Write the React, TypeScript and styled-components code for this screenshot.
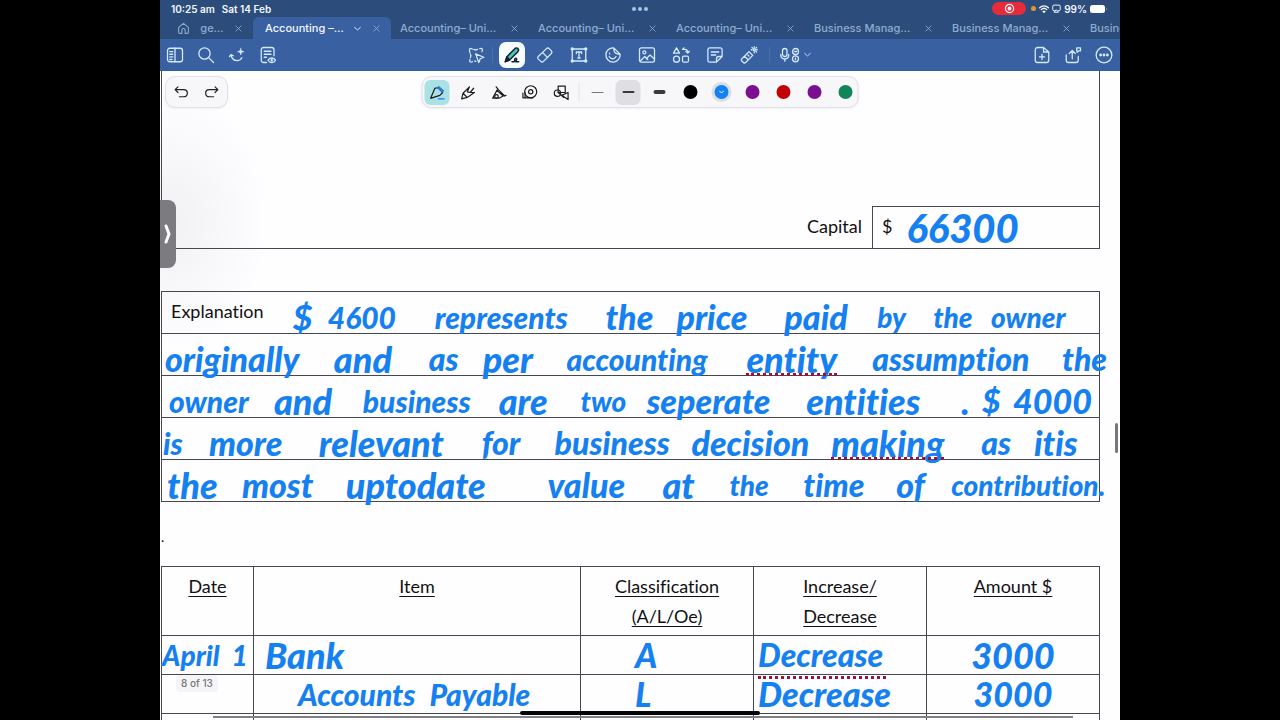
import React from "react";
import styled, { createGlobalStyle, css } from "styled-components";

const INK = "#1580f0";
const LINE = "#47474c";

const GlobalStyle = createGlobalStyle`
  * { box-sizing: border-box; }
  body { margin: 0; background: #000; font-family: Inter, "Liberation Sans", sans-serif; }
  button { border: 0; padding: 0; margin: 0; background: none; font: inherit; color: inherit; }
`;

const Tablet = styled.div`
  position: relative;
  display: flex;
  flex-direction: column;
  width: 75%;
  height: 100vh;
  margin: 0 auto;
  overflow: hidden;
  background: #fefdff;
`;

/* ---------- status bar ---------- */
const StatusBar = styled.header`
  display: grid;
  grid-template-columns: 1fr auto 1fr;
  align-items: center;
  flex: none;
  height: 17px;
  padding: 0 12px 0 11px;
  background: #2c4d7b;
  color: #f4f8fd;
  font-size: 10px;
  font-weight: 600;
`;
const StatusTime = styled.div`
  display: flex;
  gap: 7px;
`;
const StatusDots = styled.div`
  display: flex;
  gap: 2px;
  i { width: 4px; height: 4px; border-radius: 50%; background: #a9c4e6; }
`;
const StatusRight = styled.div`
  display: flex;
  justify-content: flex-end;
  align-items: center;
  gap: 3px;
`;
const RecordPill = styled.span`
  display: grid;
  place-items: center;
  width: 34px;
  height: 13px;
  margin-right: 2px;
  border-radius: 7px;
  background: #e62c3b;
`;
const MicDot = styled.i`
  width: 5px;
  height: 5px;
  border-radius: 50%;
  background: #e09a2c;
`;

/* ---------- tabs ---------- */
const TabStrip = styled.nav`
  display: flex;
  flex: none;
  height: 22px;
  overflow: hidden;
  background: #2c4d7b;
  color: #8eabd2;
  font-size: 11px;
  font-weight: 500;
`;
const HomeTab = styled.div`
  display: flex;
  flex: 0 0 93px;
  align-items: center;
  justify-content: space-between;
  padding: 0 10px 0 17px;
`;
const Tab = styled.div<{ $active?: boolean }>`
  display: flex;
  flex: 0 0 138px;
  align-items: center;
  justify-content: space-between;
  padding: 0 10px 0 9px;
  white-space: nowrap;
  ${(p) =>
    p.$active &&
    css`
      padding-left: 12px;
      border-radius: 6px 6px 0 0;
      background: #3960a0;
      color: #f2f7fd;
    `}
`;
const TabButton = styled.button`
  display: flex;
  align-items: center;
`;
const CloseButton = styled(TabButton)`
  color: #9ab5d9;
`;

/* ---------- main toolbar ---------- */
const Toolbar = styled.div`
  display: grid;
  grid-template-columns: 1fr auto 1fr;
  align-items: center;
  flex: none;
  height: 32px;
  padding: 0 6px 0 5px;
  border-bottom: 1px solid #2f6299;
  background: #3960a0;
  color: #d3ebff;
`;
const ToolGroup = styled.div<{ $end?: boolean }>`
  display: flex;
  align-items: center;
  gap: 11px;
  justify-content: ${(p) => (p.$end ? "flex-end" : "flex-start")};
`;
const CenterTools = styled.div`
  display: flex;
  align-items: center;
  gap: 10px;
`;
const SelectGroup = styled.div`
  display: flex;
  align-items: center;
  gap: 6px;
`;
const MidGroup = styled.div`
  display: flex;
  align-items: center;
  gap: 14px;
`;
const ToolButton = styled.button<{ $active?: boolean }>`
  display: grid;
  place-items: center;
  width: ${(p) => (p.$active ? 26 : 20)}px;
  height: ${(p) => (p.$active ? 26 : 20)}px;
  border-radius: 7px;
  background: ${(p) => (p.$active ? "#f7fcff" : "none")};
`;
const MicButton = styled.button`
  display: flex;
  align-items: center;
  gap: 4px;
  width: 34px;
`;
const ToolDivider = styled.i`
  width: 1px;
  height: 16px;
  background: #4a71ac;
`;
const PenDivider = styled.i`
  width: 1px;
  height: 18px;
  margin: 0 -1px;
  background: #e2e2e6;
`;

/* ---------- document ---------- */
const Document = styled.main`
  position: relative;
  flex: 1;
  min-height: 0;
  padding: 0 20px 0 1px;
  background: radial-gradient(ellipse 100px 130px at 10px 150px, #f1f1f3 0%, #fefdff 100%);
  color: #111;
  font-family: Lato, "Liberation Sans", sans-serif;
  font-size: 18px;
  font-variant-ligatures: none;
`;
const FloatingBar = styled.div`
  position: absolute;
  z-index: 2;
  top: 5px;
  display: flex;
  align-items: center;
  height: 32px;
  border: 1px solid #e1e0e4;
  border-radius: 10px;
  background: #f7f6f8;
  box-shadow: 0 1px 3px #0000000f;
`;
const HistoryBar = styled(FloatingBar)`
  left: 5px;
  width: 63px;
  justify-content: space-around;
  color: #222;
`;
const PenBar = styled(FloatingBar)`
  left: 50%;
  gap: 6px;
  padding-left: 2px;
  transform: translateX(-50%);
  color: #1c1c1e;
`;
const PenButton = styled.button<{ $bg?: string }>`
  display: grid;
  place-items: center;
  width: 25px;
  height: 25px;
  border-radius: 6px;
  background: ${(p) => p.$bg ?? "none"};
`;
const StrokeSample = styled.i<{ $h: number; $w: number }>`
  width: ${(p) => p.$w}px;
  height: ${(p) => p.$h}px;
  border-radius: 2px;
  background: ${(p) => (p.$h === 1 ? "#77777b" : "#3a3a3c")};
`;
const Swatch = styled.i<{ $color: string; $on?: boolean }>`
  display: grid;
  place-items: center;
  width: 14px;
  height: 14px;
  border-radius: 50%;
  background: ${(p) => p.$color};
  box-shadow: ${(p) => (p.$on ? "0 0 0 3px #d9dde4" : "none")};
`;
const SideHandle = styled.button`
  position: absolute;
  z-index: 2;
  left: 0;
  top: 129px;
  display: grid;
  place-items: center;
  width: 16px;
  height: 68px;
  border-radius: 0 8px 8px 0;
  background: #7c7b7f;
  color: #fff;
`;

const CapitalBox = styled.section`
  display: flex;
  justify-content: flex-end;
  align-items: flex-end;
  height: 178px;
  border: 1px solid ${LINE};
  border-top: 0;
`;
const CapitalLabel = styled.span`
  padding-right: 10px;
  line-height: 44px;
`;
const CapitalValue = styled.div`
  display: flex;
  gap: 14px;
  width: 227px;
  height: 42px;
  padding-left: 9px;
  border: solid ${LINE};
  border-width: 1px 0 0 1px;
  line-height: 38px;
`;
const inkStyle = css`
  color: ${INK};
  font-family: Lato, "Liberation Sans", sans-serif;
  font-style: italic;
  font-weight: 900;
`;
const CapitalInk = styled.span`
  ${inkStyle}
  font-size: 40px;
  line-height: 42px;
`;
const Explanation = styled.section`
  margin-top: 42px;
  border: solid ${LINE};
  border-width: 0 1px 1px;
`;
const RuledLine = styled.div`
  position: relative;
  height: 42px;
  border-top: 1px solid ${LINE};
  padding-left: 9px;
  line-height: 38px;
`;
const InkWord = styled.span<{ $x: number; $size: number; $flag?: boolean }>`
  ${inkStyle}
  position: absolute;
  z-index: 1;
  top: 0;
  left: ${(p) => ((p.$x - 162) / 938) * 100}%;
  font-size: ${(p) => p.$size}px;
  line-height: 50px;
  white-space: nowrap;
  ${(p) =>
    p.$flag &&
    css`
      &::after {
        content: "";
        position: absolute;
        left: 0;
        right: 0;
        bottom: 8px;
        border-bottom: 3px dotted #9c1238;
      }
    `}
`;
const Stop = styled.p`
  height: 64px;
  margin: 0;
  font-size: 14px;
  line-height: 70px;
`;
const Ledger = styled.table`
  width: 100%;
  border-collapse: collapse;
  table-layout: fixed;
  th, td { padding: 0; border: 1px solid ${LINE}; }
  th {
    height: 69px;
    padding-top: 4px;
    font-weight: 400;
    line-height: 30px;
    text-decoration: underline;
    text-underline-offset: 3px;
    vertical-align: top;
  }
`;
const Col = styled.col<{ $w: number }>`
  width: ${(p) => (p.$w / 938) * 100}%;
`;
const InkCell = styled.td<{ $pad?: number; $center?: boolean; $size?: number }>`
  ${inkStyle}
  height: 39px;
  font-size: ${(p) => p.$size ?? 30}px;
  line-height: 38px;
  white-space: nowrap;
  text-align: ${(p) => (p.$center ? "center" : "left")};
  && { padding-left: ${(p) => p.$pad ?? 0}px; }
`;
const Spread = styled.div<{ $gap: number }>`
  display: flex;
  gap: ${(p) => p.$gap}px;
  height: 38px;
`;
const Flagged = styled.span`
  position: relative;
  display: block;
  width: 128px;
  height: 38px;
  &::after {
    content: "";
    position: absolute;
    left: 0;
    right: 0;
    bottom: -5px;
    border-bottom: 3px dotted #9c1238;
  }
`;
const PageCount = styled.div`
  position: absolute;
  z-index: 2;
  left: 16px;
  bottom: 28px;
  padding: 0 5px;
  border-radius: 4px;
  background: #f5f4f6;
  color: #77777b;
  font: 500 10px/17px Inter, sans-serif;
`;
const ScrollThumb = styled.i`
  position: absolute;
  right: 2px;
  top: 352px;
  width: 3px;
  height: 30px;
  border-radius: 2px;
  background: #77767a;
`;
const ScrollTrack = styled.i`
  position: absolute;
  z-index: 2;
  left: 53px;
  right: 47px;
  bottom: 2px;
  height: 2px;
  background: #7f7f84;
`;
const HomeIndicator = styled.i`
  position: absolute;
  z-index: 3;
  left: 50%;
  bottom: 5px;
  width: 25%;
  height: 4px;
  border-radius: 2px;
  background: #050505;
  transform: translateX(-50%);
`;

/* ---------- icons ---------- */
const Icon = ({ size = 18, w = 1.7, children }: { size?: number; w?: number; children: React.ReactNode }) => (
  <svg width={size} height={size} viewBox="0 0 24 24" fill="none" stroke="currentColor" strokeWidth={w} strokeLinecap="round" strokeLinejoin="round" aria-hidden="true">
    {children}
  </svg>
);
const Close = () => <Icon size={9} w={2}><path d="M5 5l14 14M19 5L5 19" /></Icon>;
const Chevron = ({ size = 9 }: { size?: number }) => <Icon size={size} w={3}><path d="M2 8l10 9 10-9" /></Icon>;

const leftTools = [
  ["Sidebar", <><rect x="2" y="3" width="20" height="18" rx="3" /><path d="M12 3v18M5 7.500h4M5 11h4M5 14.500h4M5 18h3" /></>],
  ["Search", <><circle cx="10" cy="10" r="7.500" /><path d="M15.500 15.500L22 22" /></>],
  ["Assistant", <><path d="M4 12c1 5 4 7.500 8 7.500 3 0 5.500-1.500 6.500-4M2 14l2-2.500 3 1.500" /><path d="M17 3c.5 3 1.500 4 4.500 4.500-3 .5-4 1.500-4.500 4.500-.5-3-1.500-4-4.500-4.500 3-.5 4-1.500 4.500-4.500z" fill="currentColor" strokeWidth=".6" /></>],
  ["Outline", <><path d="M10 22H6a3 3 0 0 1-3-3V5a3 3 0 0 1 3-3h11a3 3 0 0 1 3 3v8M7 7h9M7 11h9M7 15h3" /><path d="M12 19c2-4 8-4 10 0-2 4-8 4-10 0z" /><circle cx="17" cy="19" r=".8" /></>],
] as const;

const midTools = [
  ["Eraser", <><path d="M3 14L14 3.500a2.500 2.500 0 0 1 3.500 0L20.500 6.500a2.500 2.500 0 0 1 0 3.500L10 20.500a2.500 2.500 0 0 1-3.500 0L3 17.500a2.500 2.500 0 0 1 0-3.500zM9 9l6.500 6.500" /></>],
  ["Text", <><path d="M3 4h18v16H3zM8.500 10V8h7v2M12 8v8M10.500 16h3" /><g fill="currentColor"><circle cx="3" cy="4" r="1.400" /><circle cx="21" cy="4" r="1.400" /><circle cx="3" cy="20" r="1.400" /><circle cx="21" cy="20" r="1.400" /></g></>],
  ["Sticker", <><path d="M13 2.500A9.500 9.500 0 1 0 21.500 11zM13 2.500c0 6 2 8.500 8.500 8.500M7 14c2 4 7 4 9 0M7.500 9.500v1" /></>],
  ["Image", <><rect x="2" y="2.500" width="20" height="19" rx="2.500" /><circle cx="8.500" cy="8.500" r="2" /><path d="M3 20l6-6 4 4M11 17l5-5 5.500 5" /></>],
  ["Shapes", <><path d="M6 2.500l4 7H2z" /><circle cx="6" cy="17.500" r="4" /><rect x="14" y="13.500" width="8" height="8" rx="2" /><path d="M14 4.500h3a4 4 0 0 1 4 4M14 4.500l2-2M21 9.500l-2.500-2M21 9.500l2-2.500" /></>],
  ["Note", <><path d="M21.500 14V5a2.500 2.500 0 0 0-2.500-2.500H5A2.500 2.500 0 0 0 2.500 5v14A2.500 2.500 0 0 0 5 21.500h9zM14 21.500V17a3 3 0 0 1 3-3h4.500M7 8h10M7 12h6" /></>],
  ["Laser", <><path d="M2.500 17L12 7.500l5 5L7.500 22a2 2 0 0 1-3 0l-2-2a2 2 0 0 1 0-3zM6 13.500l4.500 4.500M10.500 12l1.500 1.500" /><circle cx="19" cy="5" r="1.500" /><path d="M19 .8v1M19 8v1M15 5h1M22 5h1M16 2l.7.7M22 2l-.7.7M22 8l-.7-.7" /></>],
] as const;

const pens = [
  ["Ball pen", <><path d="M3 20l6-14 5-1 6 7-4 4-12 4z" /><path d="M13 4l8 7" stroke="#2f78cf" strokeWidth="4" strokeLinecap="butt" /><path d="M14 21h8" stroke="#1580f0" /></>],
  ["Fountain pen", <><path d="M3 21l2-8L14 4M3 21l8-2 10-7M5 13l6 6M14 4l-3 7 4 1 5-6M15 12l6 0" /></>],
  ["Brush pen", <><path d="M3 20L9 9l9 8-6 3zM8 4l3 4-2 1M11 8l9 9 2-1M18 17l-6 3" /><circle cx="8.500" cy="17.500" r="2.500" /></>],
  ["Tape", <><circle cx="13" cy="11" r="8.500" /><circle cx="13" cy="11" r="3" /><path d="M5 12v7M2 13v6.500h14" /></>],
  ["Shape pen", <><rect x="8" y="3" width="10" height="9" /><circle cx="7" cy="13" r="4.500" /><path d="M13 16l9-4v10zM8 12l8 7" /></>],
] as const;

type Word = [text: string, x: number, size: number, flag?: boolean];
const lines: Word[][] = [
  [["$", 293, 34], ["4600", 328, 30], ["represents", 435, 30], ["the", 606, 34], ["price", 677, 34], ["paid", 785, 34], ["by", 878, 28], ["the", 934, 28], ["owner", 992, 28]],
  [["originally", 165, 34], ["and", 334, 36], ["as", 429, 32], ["per", 483, 36], ["accounting", 567, 30], ["entity", 747, 36, true], ["assumption", 873, 32], ["the", 1063, 32]],
  [["owner", 169, 30], ["and", 274, 36], ["business", 363, 30], ["are", 499, 36], ["two", 581, 28], ["seperate", 647, 34], ["entities", 807, 36], [".", 962, 36], ["$", 983, 32], ["4000", 1014, 34]],
  [["is", 163, 30], ["more", 209, 34], ["relevant", 319, 36], ["for", 482, 32], ["business", 555, 32], ["decision", 692, 34], ["making", 832, 36, true], ["as", 982, 32], ["itis", 1035, 34]],
  [["the", 167, 36], ["most", 242, 34], ["uptodate", 346, 36], ["value", 548, 34], ["at", 663, 36], ["the", 730, 28], ["time", 804, 32], ["of", 897, 34], ["contribution.", 952, 28]],
];
const colors = ["#000", "#1481f2", "#7b0f92", "#c20305", "#7b0f92", "#12845a"];
const otherTabs = ["Accounting– Uni…", "Accounting– Uni…", "Accounting– Uni…", "Business Manag…", "Business Manag…", "Business Manag…"];

export default function App() {
  return (
    <>
      <GlobalStyle />
      <Tablet>
        <StatusBar>
          <StatusTime><span>10:25 am</span><span>Sat 14 Feb</span></StatusTime>
          <StatusDots><i /><i /><i /></StatusDots>
          <StatusRight>
            <RecordPill><Icon size={11} w={2.6}><circle cx="12" cy="12" r="9" /><circle cx="12" cy="12" r="3" fill="currentColor" /></Icon></RecordPill>
            <MicDot />
            <Icon size={10} w={3.2}><path d="M1.500 9c6-6 15-6 21 0M5.500 13.500c4-4 9-4 13 0M10 18c1-1 3-1 4 0l-2 2z" /></Icon>
            <Icon size={9} w={2.6}><path d="M8 18H5a3 3 0 0 1-3-3V6a3 3 0 0 1 3-3h14a3 3 0 0 1 3 3v9a3 3 0 0 1-3 3h-3M12 16l5 6H7z" /></Icon>
            <span>99%</span>
            <svg width="18" height="8" viewBox="0 0 18 8" aria-hidden="true"><rect width="15" height="8" rx="2.500" fill="#fff" /><path d="M16 2.500v3q1.500-1.500 0-3z" fill="#a9c4e6" /></svg>
          </StatusRight>
        </StatusBar>

        <TabStrip>
          <HomeTab>
            <TabButton aria-label="Home"><Icon size={13} w={2}><path d="M3 10l9-7.500L21 10v9a2 2 0 0 1-2 2h-4v-6a3 3 0 0 0-6 0v6H5a2 2 0 0 1-2-2z" /></Icon></TabButton>
            <TabButton>ge…</TabButton>
            <CloseButton aria-label="Close tab"><Close /></CloseButton>
          </HomeTab>
          <Tab $active>
            <TabButton>Accounting –…</TabButton>
            <TabButton aria-label="Tab menu"><Chevron size={7} /></TabButton>
            <CloseButton aria-label="Close tab"><Close /></CloseButton>
          </Tab>
          {otherTabs.map((t, i) => (
            <Tab key={i}>
              <TabButton>{t}</TabButton>
              <CloseButton aria-label="Close tab"><Close /></CloseButton>
            </Tab>
          ))}
        </TabStrip>

        <Toolbar>
          <ToolGroup>
            {leftTools.map(([name, art]) => <ToolButton key={name} aria-label={name}><Icon>{art}</Icon></ToolButton>)}
          </ToolGroup>
          <CenterTools>
            <SelectGroup>
              <ToolButton aria-label="Select">
                <Icon><path d="M9 4.500q2.500 1.500 5 0M17 3.500c4-1 4 1 3 4M4 9C2 4 4 2 7 4M4.500 11q1.500 2 0 4.500M4 18c-1 3 0 4 3.500 3M10 20l2 .5" /><path d="M11.500 10.500l11 4.500-4.800 2-2 5z" /></Icon>
              </ToolButton>
              <ToolDivider />
              <ToolButton $active aria-label="Pen">
                <Icon size={20} w={1.8}>
                  <g stroke="#15202b"><path d="M4 20l2-6L16 4q3-1 4 2l-1 2L9 18z" fill="#45c9bd" /><path d="M4 20l2-6 3 4z" fill="#15202b" /><path d="M12 20c4 1 7-3 5-4s-3 4 0 4h3" /></g>
                </Icon>
              </ToolButton>
            </SelectGroup>
            <MidGroup>
              {midTools.map(([name, art]) => <ToolButton key={name} aria-label={name}><Icon>{art}</Icon></ToolButton>)}
            </MidGroup>
            <ToolDivider />
            <MicButton aria-label="Record audio">
              <svg width="20" height="16" viewBox="0 0 20 16" fill="none" stroke="currentColor" strokeWidth="1.300" strokeLinecap="round" aria-hidden="true">
                <rect x="2.500" y="1.500" width="4.500" height="8" rx="2.200" />
                <path d="M.8 7.500c0 6 8 6 8 0M4.800 12.200v2" />
                <circle cx="15.500" cy="4.500" r="3" /><circle cx="15.500" cy="11.800" r="3" />
                <path d="M14.300 4.500h2.400M15.500 10.800v2" />
              </svg>
              <Chevron size={7} />
            </MicButton>
          </CenterTools>
          <ToolGroup $end>
            <ToolButton aria-label="Add page"><Icon><path d="M14 2H6a3 3 0 0 0-3 3v14a3 3 0 0 0 3 3h12a3 3 0 0 0 3-3V8zM14 2v6h7M12 11v7M8.500 14.500h7" /></Icon></ToolButton>
            <ToolButton aria-label="Share"><Icon><path d="M3 12v7a3 3 0 0 0 3 3h10a3 3 0 0 0 3-3v-5M11 17V6M7 10l4-4 4 4" /><path d="M17 2.500h5v4h-2.500l-2 2v-2H17z" /></Icon></ToolButton>
            <ToolButton aria-label="More"><Icon><circle cx="12" cy="12" r="10.500" /><g fill="currentColor"><circle cx="7.500" cy="12" r="1" /><circle cx="12" cy="12" r="1" /><circle cx="16.500" cy="12" r="1" /></g></Icon></ToolButton>
          </ToolGroup>
        </Toolbar>

        <Document>
          <HistoryBar>
            <PenButton aria-label="Undo"><Icon size={17}><path d="M7 4L3 8l4 4M3 8h12c7 0 7 10 0 10H9" /></Icon></PenButton>
            <PenButton aria-label="Redo"><Icon size={17}><path d="M17 4l4 4-4 4M21 8H9C2 8 2 18 9 18h6" /></Icon></PenButton>
          </HistoryBar>
          <PenBar>
            {pens.map(([name, art], i) => (
              <PenButton key={name} aria-label={name} $bg={i === 0 ? "#a9e1e5" : undefined}><Icon size={17}>{art}</Icon></PenButton>
            ))}
            <PenDivider />
            <PenButton aria-label="Thin"><StrokeSample $w={12} $h={1} /></PenButton>
            <PenButton aria-label="Medium" $bg="#dfdee2"><StrokeSample $w={12} $h={2} /></PenButton>
            <PenButton aria-label="Thick"><StrokeSample $w={12} $h={4} /></PenButton>
            {colors.map((c, i) => (
              <PenButton key={i} aria-label={"Colour " + (i + 1)}>
                <Swatch $color={c} $on={i === 1}>{i === 1 && <Icon size={6} w={4}><path d="M4 8l8 8 8-8" stroke="#fff" /></Icon>}</Swatch>
              </PenButton>
            ))}
          </PenBar>
          <SideHandle aria-label="Open panel">
            <svg width="8" height="20" viewBox="0 0 8 20" fill="none" stroke="#fff" strokeWidth="3" strokeLinecap="round" aria-hidden="true"><path d="M2 2l3 8-3 8" /></svg>
          </SideHandle>

          <CapitalBox>
            <CapitalLabel>Capital</CapitalLabel>
            <CapitalValue><span>$</span><CapitalInk>66300</CapitalInk></CapitalValue>
          </CapitalBox>

          <Explanation>
            {lines.map((words, i) => (
              <RuledLine key={i}>
                {i === 0 && "Explanation"}
                {words.map(([text, x, size, flag]) => (
                  <InkWord key={x} $x={x} $size={size} $flag={flag}>{text}</InkWord>
                ))}
              </RuledLine>
            ))}
          </Explanation>
          <Stop>.</Stop>

          <Ledger>
            <colgroup><Col $w={92} /><Col $w={327} /><Col $w={173} /><Col $w={173} /><Col $w={173} /></colgroup>
            <thead>
              <tr><th>Date</th><th>Item</th><th>Classification<br />(A/L/Oe)</th><th>Increase/<br />Decrease</th><th>Amount $</th></tr>
            </thead>
            <tbody>
              <tr>
                <InkCell $size={28}><Spread $gap={12}><span>April</span><span>1</span></Spread></InkCell>
                <InkCell $pad={11} $size={36}>Bank</InkCell>
                <InkCell $pad={54} $size={34}>A</InkCell>
                <InkCell $pad={4} $size={32}><Flagged>Decrease</Flagged></InkCell>
                <InkCell $center $size={36}>3000</InkCell>
              </tr>
              <tr>
                <InkCell />
                <InkCell $pad={44}><Spread $gap={14}><span>Accounts</span><span>Payable</span></Spread></InkCell>
                <InkCell $pad={54} $size={34}>L</InkCell>
                <InkCell $pad={4} $size={34}>Decrease</InkCell>
                <InkCell $center $size={34}>3000</InkCell>
              </tr>
              <tr><InkCell /><InkCell /><InkCell /><InkCell /><InkCell /></tr>
            </tbody>
          </Ledger>
          <ScrollThumb />
        </Document>

        <PageCount>8 of 13</PageCount>
        <ScrollTrack />
        <HomeIndicator />
      </Tablet>
    </>
  );
}
